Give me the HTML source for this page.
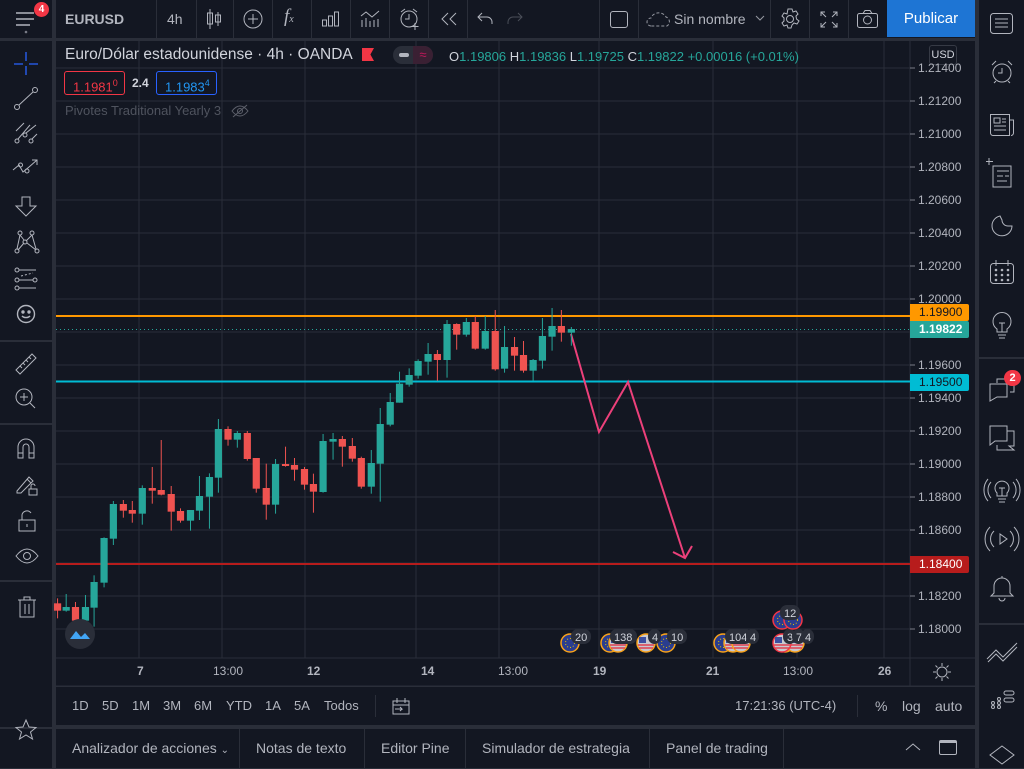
<!DOCTYPE html>
<html><head><meta charset="utf-8"><style>
*{margin:0;padding:0;box-sizing:border-box}
body{width:1024px;height:768px;overflow:hidden;background:#2a2e39;font-family:"Liberation Sans",sans-serif;color:#d1d4dc;position:relative}
.abs{position:absolute}
.p{background:#131722}
.t{position:absolute;white-space:nowrap}
.ax{position:absolute;left:918px;font-size:12px;color:#b2b5be}
.lb{position:absolute;left:910px;width:59px;height:17px;font-size:12px;line-height:17px;padding-left:9px;border-radius:0 2px 2px 0}
.tab{position:absolute;top:729px;height:39px;line-height:39px;font-size:14px;color:#b2b5be;border-right:1px solid #2a2e39;padding:0 0 0 16px;white-space:nowrap;overflow:hidden}
svg{position:absolute;overflow:visible}
</style></head><body>
<!-- top bar -->
<div class="abs p" style="left:0;top:0;width:975px;height:38px"></div>
<div class="abs" style="left:52px;top:0;width:4px;height:38px;background:#2a2e39"></div>
<svg style="left:16px;top:11px" width="20" height="20"><g stroke="#b2b5be" stroke-width="1.5"><line x1="0" y1="2" x2="18" y2="2"/><line x1="0" y1="8" x2="18" y2="8"/><line x1="0" y1="14" x2="14" y2="14"/></g><circle cx="10" cy="21" r="1.3" fill="#787b86"/></svg>
<div class="abs" style="left:34px;top:2px;width:15px;height:15px;border-radius:50%;background:#f23645;color:#fff;font-size:10px;font-weight:bold;text-align:center;line-height:15px">4</div>
<div class="t" style="left:65px;top:11px;font-size:14px;font-weight:bold;color:#b2b5be">EURUSD</div>
<div class="abs" style="left:156px;top:0;width:1px;height:38px;background:#2a2e39"></div>
<div class="t" style="left:167px;top:11px;font-size:14px;color:#b2b5be">4h</div>
<div class="abs" style="left:196px;top:0;width:1px;height:38px;background:#2a2e39"></div>
<svg style="left:204px;top:9px" width="20" height="20" fill="none" stroke="#b2b5be"><line x1="6" y1="0" x2="6" y2="20"/><rect x="3.5" y="4" width="5" height="11"/><line x1="14" y1="3" x2="14" y2="17"/><rect x="11.5" y="6" width="5" height="7"/></svg>
<div class="abs" style="left:233px;top:0;width:1px;height:38px;background:#2a2e39"></div>
<svg style="left:243px;top:9px" width="20" height="20" fill="none" stroke="#b2b5be"><circle cx="10" cy="10" r="9"/><line x1="10" y1="5" x2="10" y2="15"/><line x1="5" y1="10" x2="15" y2="10"/></svg>
<div class="abs" style="left:272px;top:0;width:1px;height:38px;background:#2a2e39"></div>
<div class="t" style="left:284px;top:6px;font-size:19px;color:#b2b5be;font-family:'Liberation Serif',serif;font-style:italic">f<span style="font-size:10px">x</span></div>
<div class="abs" style="left:311px;top:0;width:1px;height:38px;background:#2a2e39"></div>
<svg style="left:322px;top:11px" width="18" height="16" fill="none" stroke="#b2b5be"><rect x="0.5" y="9" width="4" height="6"/><rect x="6.5" y="5" width="4" height="10"/><rect x="12.5" y="1" width="4" height="14"/></svg>
<div class="abs" style="left:350px;top:0;width:1px;height:38px;background:#2a2e39"></div>
<svg style="left:361px;top:10px" width="20" height="18" fill="none" stroke="#b2b5be"><path d="M0 6l5-4 6 5 7-6"/><path d="M1 10v7M5 8v9M9 11v6M13 10v7M17 9v8"/></svg>
<div class="abs" style="left:389px;top:0;width:1px;height:38px;background:#2a2e39"></div>
<svg style="left:399px;top:8px" width="22" height="22" fill="none" stroke="#b2b5be"><circle cx="10" cy="11" r="8"/><path d="M10 6v5h-4M2 4l4-3M18 4l-4-3M16 15v7M12.5 18.5h7"/></svg>
<div class="abs" style="left:428px;top:0;width:1px;height:38px;background:#2a2e39"></div>
<svg style="left:440px;top:12px" width="18" height="14" fill="none" stroke="#b2b5be"><path d="M8 1L2 7l6 6M16 1l-6 6 6 6"/></svg>
<div class="abs" style="left:467px;top:0;width:1px;height:38px;background:#2a2e39"></div>
<svg style="left:477px;top:12px" width="18" height="14" fill="none" stroke="#b2b5be"><path d="M5 1L1 5l4 4M1 5h9a5 5 0 015 5v2"/></svg>
<svg style="left:505px;top:12px" width="18" height="14" fill="none" stroke="#4a4e58"><path d="M13 1l4 4-4 4M17 5H8a5 5 0 00-5 5v2"/></svg>
<div class="abs" style="left:599px;top:0;width:1px;height:38px;background:#2a2e39"></div>
<div class="abs" style="left:610px;top:11px;width:18px;height:17px;border:1.2px solid #b2b5be;border-radius:3px"></div>
<div class="abs" style="left:638px;top:0;width:1px;height:38px;background:#2a2e39"></div>
<svg style="left:646px;top:10px" width="26" height="18" fill="none" stroke="#9598a1" stroke-dasharray="3 2"><path d="M5 16a4 4 0 010-8 8 7 0 0115-1 5 5 0 011 9z"/></svg>
<div class="t" style="left:674px;top:11px;font-size:14px;color:#b2b5be">Sin nombre</div>
<svg style="left:755px;top:15px" width="10" height="6" fill="none" stroke="#9598a1"><path d="M1 1l4 4 4-4"/></svg>
<div class="abs" style="left:770px;top:0;width:1px;height:38px;background:#2a2e39"></div>
<svg style="left:779px;top:8px" width="22" height="22" fill="none" stroke="#b2b5be"><circle cx="11" cy="11" r="3.5"/><path d="M9 1h4l1 3 3-1 2 3-2 2 .5 3 2.5 2-2 3-3-1-2 2-1 3H9l-1-3-3 1-2-3 2-2v-3L3 8l2-3 3 1z"/></svg>
<div class="abs" style="left:809px;top:0;width:1px;height:38px;background:#2a2e39"></div>
<svg style="left:820px;top:11px" width="18" height="17" fill="none" stroke="#b2b5be"><path d="M1 5V1h4M1 1l5 5M17 5V1h-4M17 1l-5 5M1 12v4h4M1 16l5-5M17 12v4h-4M17 16l-5-5"/></svg>
<div class="abs" style="left:848px;top:0;width:1px;height:38px;background:#2a2e39"></div>
<svg style="left:857px;top:10px" width="22" height="18" fill="none" stroke="#b2b5be"><rect x="0.5" y="3.5" width="20" height="14" rx="2"/><path d="M6 3.5l2-3h5l2 3"/><circle cx="10.5" cy="10" r="4"/></svg>
<div class="abs" style="left:887px;top:0;width:88px;height:37px;background:#1e75d4;color:#fff;font-size:15px;text-align:center;line-height:37px">Publicar</div>

<!-- left toolbar -->
<div class="abs p" style="left:0;top:41px;width:52px;height:686px"></div>
<div class="abs p" style="left:0;top:729px;width:52px;height:39px"></div>
<div class="abs" style="left:0;top:340px;width:52px;height:2px;background:#2a2e39"></div>
<div class="abs" style="left:0;top:423px;width:52px;height:2px;background:#2a2e39"></div>
<div class="abs" style="left:0;top:580px;width:52px;height:2px;background:#2a2e39"></div>
<svg style="left:14px;top:52px" width="24" height="24" stroke="#2962ff" stroke-width="1.3"><path d="M12 0v9M12 14v9M0 12h9M15 12h9"/></svg>
<svg style="left:14px;top:87px" width="24" height="24" fill="none" stroke="#b2b5be"><circle cx="3" cy="20" r="2.5"/><circle cx="21" cy="3" r="2.5"/><path d="M5 18L19 5"/></svg>
<svg style="left:14px;top:121px" width="24" height="24" fill="none" stroke="#b2b5be"><circle cx="3" cy="20" r="2"/><circle cx="11" cy="14" r="2"/><circle cx="17" cy="20" r="2"/><path d="M2 10l8-8M4 18l12-14M12 12l10-8M18 18l5-5"/></svg>
<svg style="left:13px;top:158px" width="26" height="20" fill="none" stroke="#b2b5be"><path d="M0 12l6-5 4 7 6-5 8-7M19 2h5v5"/><circle cx="7.5" cy="7" r="2"/><circle cx="14" cy="13" r="2"/></svg>
<svg style="left:16px;top:196px" width="22" height="22" fill="none" stroke="#b2b5be"><path d="M6 1h8v9h6L10 20 0 10h6z"/></svg>
<svg style="left:14px;top:229px" width="26" height="26" fill="none" stroke="#b2b5be"><circle cx="6" cy="4" r="2"/><circle cx="18" cy="4" r="2"/><circle cx="11" cy="13" r="2"/><circle cx="3" cy="22" r="2"/><circle cx="23" cy="22" r="2"/><path d="M6 6L3 20M6 6l4 5M18 6l-6 6M18 6l4 14M4 21l6-7M13 14l9 7"/></svg>
<svg style="left:14px;top:268px" width="24" height="22" fill="none" stroke="#b2b5be"><circle cx="3" cy="2" r="2"/><circle cx="3" cy="12" r="2"/><circle cx="3" cy="20" r="2"/><circle cx="21" cy="12" r="2"/><path d="M5 2h17M5 12h14M5 20h17"/><path d="M7 8l12-3" stroke-dasharray="2 2"/></svg>
<svg style="left:16px;top:304px" width="20" height="20" fill="none" stroke="#b2b5be" stroke-width="1.4"><circle cx="10" cy="10" r="8.5"/><circle cx="7" cy="8" r="1" fill="#b2b5be"/><circle cx="13" cy="8" r="1" fill="#b2b5be"/><path d="M6 12a5 4 0 008 0"/></svg>
<svg style="left:14px;top:352px" width="24" height="24" fill="none" stroke="#b2b5be"><path d="M2 18L18 2l4 4L6 22z"/><path d="M6 14l2 2M9 11l2 2M12 8l2 2M15 5l2 2"/></svg>
<svg style="left:15px;top:388px" width="22" height="22" fill="none" stroke="#b2b5be"><circle cx="9" cy="9" r="8"/><path d="M9 5v8M5 9h8M15 15l5 5"/></svg>
<svg style="left:17px;top:438px" width="18" height="22" fill="none" stroke="#b2b5be"><path d="M1 20V9a8 8 0 0116 0v11h-5V9a3 3 0 00-6 0v11z M1 15h5M12 15h5"/></svg>
<svg style="left:15px;top:473px" width="24" height="24" fill="none" stroke="#b2b5be"><path d="M2 18L14 4l4 4L6 20H2z M12 6l4 4"/><rect x="14" y="16" width="8" height="6"/><path d="M16 16v-3a2 2 0 014 0"/></svg>
<svg style="left:18px;top:510px" width="18" height="22" fill="none" stroke="#b2b5be"><rect x="1" y="10" width="16" height="11"/><path d="M4 10V5a5 5 0 019-2M9 14v3"/></svg>
<svg style="left:15px;top:548px" width="24" height="16" fill="none" stroke="#b2b5be"><path d="M1 8q11-14 22 0q-11 14-22 0z"/><circle cx="12" cy="8" r="3.5"/></svg>
<svg style="left:17px;top:596px" width="20" height="22" fill="none" stroke="#b2b5be"><path d="M1 4h18M7 4V1h6v3M3 4v17h14V4M8 8v10M12 8v10"/></svg>
<svg style="left:15px;top:719px" width="22" height="22" fill="none" stroke="#b2b5be"><path d="M11 1l3 7 7 .5-5.5 4.5 2 7-6.5-4-6.5 4 2-7L1 8.5 8 8z"/></svg>

<!-- chart -->
<div class="abs p" style="left:56px;top:41px;width:919px;height:645px"></div>
<svg style="left:0;top:0" width="1024" height="768">
<g stroke="#2a2e39" stroke-width="1">
<path d="M56 68H910M56 101H910M56 134H910M56 167H910M56 200H910M56 233H910M56 266H910M56 299H910M56 332H910M56 365H910M56 398H910M56 431H910M56 464H910M56 497H910M56 530H910M56 563H910M56 596H910M56 629H910"/>
<path d="M139 41V658M222 41V658M305 41V658M416 41V658M499 41V658M599 41V658M713 41V658M797 41V658M884 41V658"/>
<path d="M56 658H975M910 41V686M56 686H975"/>
</g>
<g stroke="#787b86"><path d="M910 68h5M910 101h5M910 134h5M910 167h5M910 200h5M910 233h5M910 266h5M910 299h5M910 332h5M910 365h5M910 398h5M910 431h5M910 464h5M910 497h5M910 530h5M910 563h5M910 596h5M910 629h5"/></g>
<line x1="56" y1="316" x2="910" y2="316" stroke="#ff9800" stroke-width="2"/>
<line x1="56" y1="329.5" x2="910" y2="329.5" stroke="#26a69a" stroke-width="1" stroke-dasharray="1 3"/>
<line x1="56" y1="381.5" x2="910" y2="381.5" stroke="#00bcd4" stroke-width="2"/>
<line x1="56" y1="564" x2="910" y2="564" stroke="#b71c1c" stroke-width="2"/>
<polyline points="571,334 599,432 628,382 685,558" fill="none" stroke="#ec407a" stroke-width="2"/>
<polyline points="673,552 685,558 692,546" fill="none" stroke="#ec407a" stroke-width="2"/>
</svg>
<svg style="left:0;top:0" width="1024" height="768" id="cs"></svg>
<script>
var d=[[22,895,955,910,932,0],[47,882,935,921,932,1],[74,906,970,921,962,0],[103,885,970,921,962,1],[128,826,980,846,923,1],[157,712,862,714,848,1],[184,603,735,612,716,1],[213,600,653,612,632,0],[239,603,668,630,641,0],[268,556,674,564,641,1],[297,501,611,564,572,0],[323,420,586,570,584,0],[352,558,692,582,635,0],[379,625,668,633,662,0],[408,630,692,630,662,1],[434,528,660,588,632,1],[463,520,686,531,590,1],[489,357,578,387,533,1],[517,379,437,387,419,0],[544,393,443,399,419,1],[573,393,482,399,477,0],[599,474,578,474,566,0],[628,491,659,564,614,0],[655,477,641,492,614,1],[684,440,500,492,497,0],[710,474,542,495,509,0],[739,501,569,507,554,0],[765,521,638,552,575,0],[793,402,578,423,576,1],[822,399,479,417,425,1],[849,408,500,417,440,0],[878,414,485,438,476,0],[904,470,566,474,560,0],[933,450,581,489,560,1],[959,324,605,372,491,1],[988,279,379,306,374,1],[1015,215,308,251,308,1],[1043,205,260,225,254,1],[1069,178,236,183,227,1],[1098,129,224,162,185,1],[1125,150,242,162,180,0],[1153,60,233,72,180,1],[1181,70,149,72,104,0],[1209,54,110,66,104,1],[1235,48,149,66,146,0],[1264,48,149,93,146,1],[1293,30,212,93,208,0],[1320,78,218,141,206,1],[1349,111,212,141,167,0],[1375,123,218,165,212,0],[1403,177,242,180,212,1],[1430,54,206,108,182,1],[1458,24,152,78,110,1],[1485,30,125,78,98,0],[1514,81,137,87,98,1]];
var s='';
var K=1/2.904;
d.forEach(function(c){var col=c[5]?'#26a69a':'#ef5350';var x=50+c[0]*K;
var y=function(v){return 300+v/3;};
s+='<line x1="'+x+'" y1="'+y(c[1])+'" x2="'+x+'" y2="'+y(c[2])+'" stroke="'+col+'" stroke-width="1"/>';
s+='<rect x="'+(x-3.6)+'" y="'+y(c[3])+'" width="7.2" height="'+Math.max(2,(c[4]-c[3])/3)+'" fill="'+col+'"/>';});
function ev(x,y,st,us){return '<circle cx="'+x+'" cy="'+y+'" r="9" fill="'+(us?'#c8c8d0':'#2a3d8f')+'" stroke="'+st+'" stroke-width="1.5"/>'+(us?'<rect x="'+(x-7)+'" y="'+(y-6)+'" width="7" height="6" fill="#3c4fa0"/><path d="M'+(x-8)+' '+(y+2)+'h16M'+(x-7)+' '+(y+5)+'h14" stroke="#e04050" stroke-width="1.5"/>':'<circle cx="'+x+'" cy="'+y+'" r="4.5" fill="none" stroke="#e6c200" stroke-width="1" stroke-dasharray="1 2"/>');}
function bd(x,y,t){var w=t.length*7+6;return '<rect x="'+(x-4)+'" y="'+(y-8)+'" width="'+w+'" height="15" rx="7" fill="#2a2e39"/><text x="'+x+'" y="'+(y+4)+'" font-size="11" fill="#d1d4dc" font-family="Liberation Sans">'+t+'</text>';}
s+=ev(610,643,'#f7a21b',0)+ev(618,643,'#f7a21b',1)+bd(614,637,'138');
s+=ev(570,643,'#f7a21b',0)+bd(575,637,'20');
s+=ev(646,643,'#f7a21b',1)+ev(666,643,'#f7a21b',0)+bd(652,637,'4')+bd(671,637,'10');
s+=ev(723,643,'#f7a21b',0)+ev(733,643,'#f7a21b',1)+ev(741,643,'#f7a21b',1)+bd(729,637,'104')+bd(750,637,'4');
s+=ev(785,643,'#f7a21b',1)+ev(795,643,'#f7a21b',1)+ev(782,643,'#f23645',1)+bd(787,637,'3')+bd(796,637,'7')+bd(805,637,'4');
s+=ev(782,620,'#f23645',0)+ev(793,620,'#f23645',0)+bd(784,613,'12');
document.getElementById('cs').innerHTML=s;
</script>
<div class="abs" style="left:65px;top:619px;width:30px;height:30px;border-radius:50%;background:#2a2e39"></div>
<svg style="left:69px;top:627px" width="22" height="14"><path d="M1 12l6-8 5 6 4-4 5 6z" fill="#42a5f5"/></svg>

<div class="t" style="left:65px;top:46px;font-size:15.5px;color:#d1d4dc">Euro/Dólar estadounidense · 4h · OANDA</div>
<div class="abs" style="left:362px;top:48px;width:12px;height:13px;background:#f23645;clip-path:polygon(0 0,100% 0,70% 50%,100% 100%,0 100%)"></div>
<div class="abs" style="left:393px;top:46px;width:40px;height:18px;border-radius:9px;background:#2a2e39"></div>
<div class="abs" style="left:413px;top:46px;width:20px;height:18px;border-radius:0 9px 9px 0;background:#3a2033;color:#c2185b;font-size:13px;text-align:center;line-height:18px">≈</div>
<div class="abs" style="left:399px;top:53px;width:10px;height:4px;border-radius:2px;background:#b2b5be"></div>
<div class="t" style="left:449px;top:49px;font-size:13px;color:#d1d4dc">O<span style="color:#26a69a">1.19806</span> H<span style="color:#26a69a">1.19836</span> L<span style="color:#26a69a">1.19725</span> C<span style="color:#26a69a">1.19822</span> <span style="color:#26a69a">+0.00016 (+0.01%)</span></div>
<div class="abs" style="left:64px;top:71px;width:61px;height:24px;border:1px solid #f23645;border-radius:3px;color:#f23645;font-size:13px;line-height:22px;padding-left:8px">1.1981<sup style="font-size:9px">0</sup></div>
<div class="t" style="left:132px;top:76px;font-size:12px;font-weight:bold;color:#d1d4dc">2.4</div>
<div class="abs" style="left:156px;top:71px;width:61px;height:24px;border:1px solid #2962ff;border-radius:3px;color:#2196f3;font-size:13px;line-height:22px;padding-left:8px">1.1983<sup style="font-size:9px">4</sup></div>
<div class="t" style="left:65px;top:103px;font-size:13px;color:#4f535e">Pivotes Traditional Yearly 3</div>
<svg style="left:231px;top:104px" width="18" height="14" fill="none" stroke="#5d606b"><path d="M1 7q8-10 16 0q-8 10-16 0zM2 13L16 1"/><circle cx="9" cy="7" r="2.5"/></svg>

<div class="abs" style="left:929px;top:45px;width:28px;height:20px;border:1px solid #363a45;border-radius:3px;font-size:11px;line-height:18px;text-align:center;color:#d1d4dc;background:#131722">USD</div>
<div class="ax" style="top:61px">1.21400</div><div class="ax" style="top:94px">1.21200</div><div class="ax" style="top:127px">1.21000</div><div class="ax" style="top:160px">1.20800</div><div class="ax" style="top:193px">1.20600</div><div class="ax" style="top:226px">1.20400</div><div class="ax" style="top:259px">1.20200</div><div class="ax" style="top:292px">1.20000</div><div class="ax" style="top:358px">1.19600</div><div class="ax" style="top:391px">1.19400</div><div class="ax" style="top:424px">1.19200</div><div class="ax" style="top:457px">1.19000</div><div class="ax" style="top:490px">1.18800</div><div class="ax" style="top:523px">1.18600</div><div class="ax" style="top:589px">1.18200</div><div class="ax" style="top:622px">1.18000</div>
<div class="lb" style="top:304px;background:#ff9800;color:#131722">1.19900</div>
<div class="lb" style="top:321px;background:#26a69a;color:#fff;font-weight:bold">1.19822</div>
<div class="lb" style="top:374px;background:#00bcd4;color:#131722">1.19500</div>
<div class="lb" style="top:556px;background:#b71c1c;color:#fff">1.18400</div>

<div class="t" style="left:137px;top:664px;font-size:12px;font-weight:bold;color:#b2b5be">7</div>
<div class="t" style="left:213px;top:664px;font-size:12px;color:#b2b5be">13:00</div>
<div class="t" style="left:307px;top:664px;font-size:12px;font-weight:bold;color:#b2b5be">12</div>
<div class="t" style="left:421px;top:664px;font-size:12px;font-weight:bold;color:#b2b5be">14</div>
<div class="t" style="left:498px;top:664px;font-size:12px;color:#b2b5be">13:00</div>
<div class="t" style="left:593px;top:664px;font-size:12px;font-weight:bold;color:#b2b5be">19</div>
<div class="t" style="left:706px;top:664px;font-size:12px;font-weight:bold;color:#b2b5be">21</div>
<div class="t" style="left:783px;top:664px;font-size:12px;color:#b2b5be">13:00</div>
<div class="t" style="left:878px;top:664px;font-size:12px;font-weight:bold;color:#b2b5be">26</div>
<svg style="left:933px;top:663px" width="18" height="18" fill="none" stroke="#b2b5be"><circle cx="9" cy="9" r="5"/><path d="M9 0v3M9 15v3M0 9h3M15 9h3M2.5 2.5l2 2M13.5 13.5l2 2M2.5 15.5l2-2M13.5 4.5l2-2"/></svg>

<!-- bottom range bar -->
<div class="abs p" style="left:56px;top:687px;width:919px;height:38px"></div>
<div class="t" style="left:72px;top:698px;font-size:13px;color:#b2b5be">1D</div>
<div class="t" style="left:102px;top:698px;font-size:13px;color:#b2b5be">5D</div>
<div class="t" style="left:132px;top:698px;font-size:13px;color:#b2b5be">1M</div>
<div class="t" style="left:163px;top:698px;font-size:13px;color:#b2b5be">3M</div>
<div class="t" style="left:194px;top:698px;font-size:13px;color:#b2b5be">6M</div>
<div class="t" style="left:226px;top:698px;font-size:13px;color:#b2b5be">YTD</div>
<div class="t" style="left:265px;top:698px;font-size:13px;color:#b2b5be">1A</div>
<div class="t" style="left:294px;top:698px;font-size:13px;color:#b2b5be">5A</div>
<div class="t" style="left:324px;top:698px;font-size:13px;color:#b2b5be">Todos</div>
<div class="abs" style="left:375px;top:695px;width:1px;height:22px;background:#2a2e39"></div>
<svg style="left:392px;top:697px" width="18" height="18" fill="none" stroke="#b2b5be"><path d="M1 4h16v13H1zM1 8h16M5 1v5M13 1v5M3 12h7l-2-2M10 12l-2 2"/></svg>
<div class="t" style="left:735px;top:698px;font-size:13px;color:#b2b5be">17:21:36 (UTC-4)</div>
<div class="abs" style="left:857px;top:695px;width:1px;height:22px;background:#2a2e39"></div>
<div class="t" style="left:875px;top:698px;font-size:14px;color:#b2b5be">%</div>
<div class="t" style="left:902px;top:698px;font-size:14px;color:#b2b5be">log</div>
<div class="t" style="left:935px;top:698px;font-size:14px;color:#b2b5be">auto</div>

<!-- tabs -->
<div class="abs p" style="left:56px;top:729px;width:919px;height:39px"></div>
<div class="tab" style="left:56px;width:184px">Analizador de acciones <span style="font-size:10px">&#8964;</span></div>
<div class="tab" style="left:240px;width:125px">Notas de texto</div>
<div class="tab" style="left:365px;width:101px">Editor Pine</div>
<div class="tab" style="left:466px;width:184px">Simulador de estrategia</div>
<div class="tab" style="left:650px;width:134px">Panel de trading</div>
<svg style="left:905px;top:742px" width="16" height="10" fill="none" stroke="#b2b5be"><path d="M1 8l7-6 7 6"/></svg>
<div class="abs" style="left:939px;top:740px;width:18px;height:15px;border:1.2px solid #b2b5be;border-radius:2px;border-top-width:3px"></div>

<!-- right toolbar -->
<div class="abs p" style="left:979px;top:0;width:45px;height:768px"></div>
<div class="abs" style="left:979px;top:357px;width:45px;height:2px;background:#2a2e39"></div>
<div class="abs" style="left:979px;top:623px;width:45px;height:2px;background:#2a2e39"></div>
<svg style="left:990px;top:13px" width="24" height="22" fill="none" stroke="#b2b5be"><rect x="0.5" y="0.5" width="22" height="20" rx="3"/><path d="M5 6h13M5 10h13M5 14h13"/></svg>
<svg style="left:990px;top:60px" width="24" height="24" fill="none" stroke="#b2b5be"><circle cx="12" cy="13" r="9"/><path d="M12 8v5H8M2 5l4-4M22 5l-4-4M6 21l-2 2M18 21l2 2"/></svg>
<svg style="left:990px;top:114px" width="26" height="22" fill="none" stroke="#b2b5be"><path d="M0.5 0.5h19v21H3a2.5 2.5 0 01-2.5-2.5zM19.5 6h4v13a2.5 2.5 0 01-2.5 2.5"/><path d="M4 4h6v5H4zM12 5h4M12 8h4M4 12h12M4 16h12"/></svg>
<svg style="left:986px;top:158px" width="30" height="30" fill="none" stroke="#b2b5be"><path d="M3 0v7M0 3.5h7"/><path d="M7 8h18v21H7z"/><path d="M11 13h12M11 18h6M19 18h4M11 23h10"/></svg>
<svg style="left:992px;top:214px" width="22" height="24" fill="none" stroke="#b2b5be"><path d="M8 2a10 10 0 1012 10h-4a6 6 0 01-6-6z"/></svg>
<svg style="left:990px;top:260px" width="24" height="24" fill="none" stroke="#b2b5be"><rect x="0.5" y="3.5" width="23" height="20" rx="3"/><path d="M6 0v6M18 0v6"/><g fill="#b2b5be" stroke="none"><circle cx="6" cy="10" r="1.3"/><circle cx="12" cy="10" r="1.3"/><circle cx="18" cy="10" r="1.3"/><circle cx="6" cy="15" r="1.3"/><circle cx="12" cy="15" r="1.3"/><circle cx="18" cy="15" r="1.3"/><circle cx="6" cy="20" r="1.3"/><circle cx="12" cy="20" r="1.3"/><circle cx="18" cy="20" r="1.3"/></g></svg>
<svg style="left:992px;top:311px" width="20" height="28" fill="none" stroke="#b2b5be"><path d="M5 18a9 9 0 1110 0v3H5z M10 12v9M7 12h6M6 24h8M7 27h6"/></svg>
<svg style="left:989px;top:378px" width="26" height="24" fill="none" stroke="#b2b5be"><path d="M8 5V1h17v13h-4M1 6h17v13H8l-7 4z"/></svg>
<div class="abs" style="left:1004px;top:370px;width:17px;height:16px;border-radius:8px;background:#f23645;color:#fff;font-size:11px;font-weight:bold;text-align:center;line-height:16px">2</div>
<svg style="left:989px;top:425px" width="26" height="26" fill="none" stroke="#b2b5be"><path d="M1 1h17v15H6l-5 4zM18 6h7v15h-5l5 4H8v-5"/></svg>
<svg style="left:985px;top:476px" width="34" height="28" fill="none" stroke="#b2b5be"><path d="M12 17a7 7 0 1110 0v3h-10z M17 12v8M14 12h6M13 23h8M14 26h6M6 6a12 12 0 000 16M3 3a17 17 0 000 22M28 6a12 12 0 010 16M31 3a17 17 0 010 22"/></svg>
<svg style="left:986px;top:525px" width="32" height="28" fill="none" stroke="#b2b5be"><path d="M14 9v10l7-5z M8 6a11 11 0 000 16M4 2a17 17 0 000 24M24 6a11 11 0 010 16M28 2a17 17 0 010 24"/></svg>
<svg style="left:990px;top:575px" width="24" height="26" fill="none" stroke="#b2b5be"><path d="M4 18V11a8 8 0 0116 0v7l3 3H1zM9 23a3 3 0 006 0M12 1v2"/></svg>
<svg style="left:986px;top:641px" width="32" height="22" fill="none" stroke="#b2b5be"><path d="M1 18l9-9 7 7 14-14M2 21l8-8 7 7 14-14"/></svg>
<svg style="left:990px;top:689px" width="26" height="22" fill="none" stroke="#b2b5be"><circle cx="3" cy="18" r="1.5"/><circle cx="3" cy="14" r="1.5"/><circle cx="9" cy="14" r="1.5"/><circle cx="9" cy="18" r="1.5"/><circle cx="9" cy="10" r="1.5"/><rect x="14" y="2" width="10" height="4" rx="2"/><rect x="14" y="9" width="10" height="4" rx="2"/></svg>
<svg style="left:989px;top:745px" width="26" height="24" fill="none" stroke="#b2b5be"><path d="M13 1l12 9-12 9L1 10z"/></svg>
</body></html>
